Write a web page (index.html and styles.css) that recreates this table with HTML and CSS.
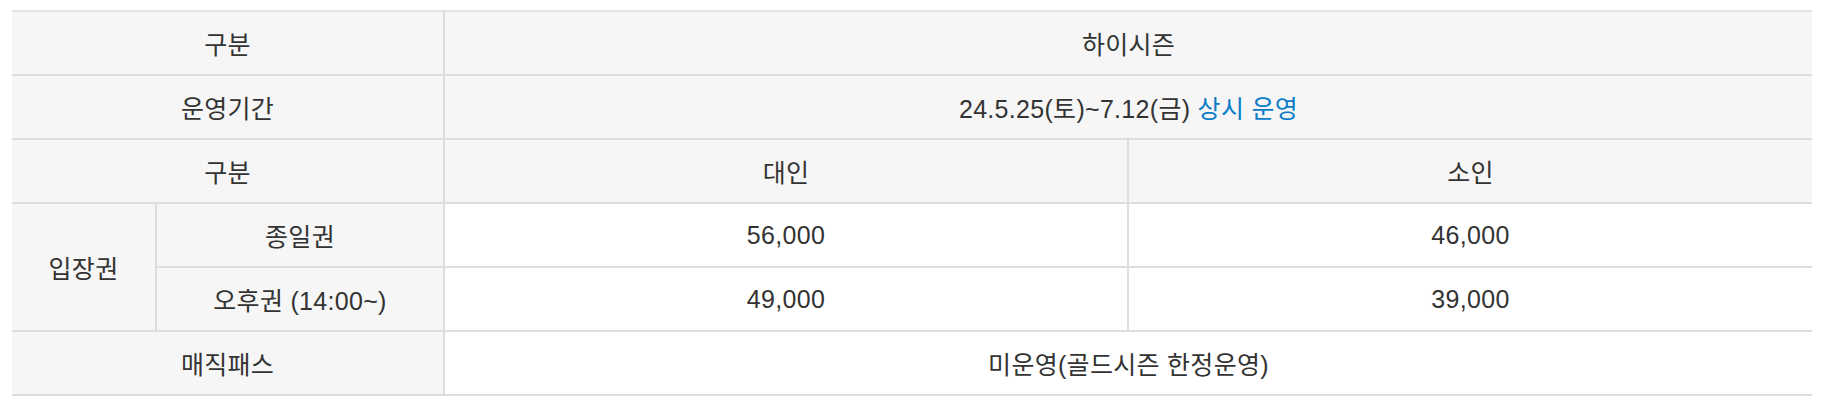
FILE: index.html
```html
<!DOCTYPE html>
<html lang="ko">
<head>
<meta charset="utf-8">
<title>하이시즌 요금</title>
<link rel="stylesheet" href="styles.css">
</head>
<body>
<div class="wrap">
  <table class="price">
    <colgroup>
      <col class="c1"><col class="c2"><col class="c3"><col class="c4">
    </colgroup>
    <tbody>
      <tr class="gray">
        <th colspan="2">구분</th>
        <td colspan="2">하이시즌</td>
      </tr>
      <tr class="gray">
        <th colspan="2">운영기간</th>
        <td colspan="2">24.5.25(토)~7.12(금) <span class="blue">상시 운영</span></td>
      </tr>
      <tr class="gray">
        <th colspan="2">구분</th>
        <td>대인</td>
        <td>소인</td>
      </tr>
      <tr>
        <th rowspan="2">입장권</th>
        <th>종일권</th>
        <td>56,000</td>
        <td>46,000</td>
      </tr>
      <tr>
        <th>오후권 (14:00~)</th>
        <td>49,000</td>
        <td>39,000</td>
      </tr>
      <tr>
        <th colspan="2">매직패스</th>
        <td colspan="2">미운영(골드시즌 한정운영)</td>
      </tr>
    </tbody>
  </table>
</div>
</body>
</html>
```

FILE: styles.css
```css
html, body {
  margin: 0;
  padding: 0;
  background: #ffffff;
}

.wrap {
  padding: 10px 12px;
}

.price {
  width: 100%;
  border-collapse: collapse;
  table-layout: fixed;
  font-family: "Liberation Sans", "Noto Sans CJK KR", sans-serif;
  font-size: 25px;
  letter-spacing: 0.3px;
  color: #333333;
  border-top: 2px solid #e2e4e7;
  border-bottom: 2px solid #dddddd;
}

.c1 { width: 8%; }
.c2 { width: 16%; }
.c3 { width: 38%; }
.c4 { width: 38%; }

.price th,
.price td {
  height: 62px;
  padding: 0;
  text-align: center;
  vertical-align: middle;
  font-weight: 400;
  border: 2px solid #dddddd;
  background: #ffffff;
}

.price tr:first-child th,
.price tr:first-child td {
  border-top: 2px solid #e2e4e7;
}

.price th {
  background: #f6f6f6;
}

.price tr.gray td {
  background: #f6f6f6;
}

.price tr > :first-child {
  border-left: none;
}

.price tr > :last-child {
  border-right: none;
}

.price tr:nth-child(5) > th:first-child {
  border-left: 2px solid #dddddd;
}

.blue {
  color: #0a7cc8;
}
```
